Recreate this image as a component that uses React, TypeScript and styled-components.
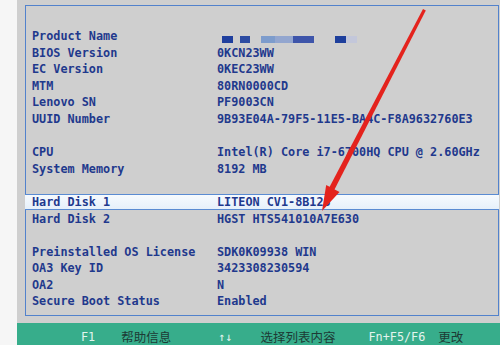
import React from "react";
import styled, { createGlobalStyle } from "styled-components";

const GlobalStyle = createGlobalStyle`
  html, body {
    margin: 0;
    padding: 0;
    background: #ffffff;
  }
`;

type Info = { label: string; value: string; selected?: boolean } | null;

const rows: Info[] = [
  { label: "Product Name", value: "" },
  { label: "BIOS Version", value: "0KCN23WW" },
  { label: "EC Version", value: "0KEC23WW" },
  { label: "MTM", value: "80RN0000CD" },
  { label: "Lenovo SN", value: "PF9003CN" },
  { label: "UUID Number", value: "9B93E04A-79F5-11E5-BA4C-F8A9632760E3" },
  null,
  { label: "CPU", value: "Intel(R) Core i7-6700HQ CPU @ 2.60GHz" },
  { label: "System Memory", value: "8192 MB" },
  null,
  { label: "Hard Disk 1", value: "LITEON CV1-8B128", selected: true },
  { label: "Hard Disk 2", value: "HGST HTS541010A7E630" },
  null,
  { label: "Preinstalled OS License", value: "SDK0K09938 WIN" },
  { label: "OA3 Key ID", value: "3423308230594" },
  { label: "OA2", value: "N" },
  { label: "Secure Boot Status", value: "Enabled" },
];

const mosaic = [
  { w: 11, gap: 7, c: "#1f3f9e" },
  { w: 10, gap: 11, c: "#2c4ba2" },
  { w: 14, gap: 0, c: "#7d9ccc" },
  { w: 18, gap: 0, c: "#93a6cf" },
  { w: 21, gap: 21, c: "#3e55aa" },
  { w: 11, gap: 0, c: "#1e3f9c" },
  { w: 11, gap: 0, c: "#c3c7da" },
];

const keys = [
  { key: "F1", desc: "帮助信息", before: 64, between: 26 },
  { key: "↑↓", desc: "选择列表内容", before: 47, between: 28 },
  { key: "Fn+F5/F6", desc: "更改", before: 33, between: 13 },
];

const App: React.FC = () => {
  return (
    <Screen>
      <GlobalStyle />
      <Strip />
      <Main>
        <Panel>
          <Frame>
            {rows.map((row, i) =>
              row ? (
                <Row key={i} $selected={row.selected}>
                  <Label>{row.label}</Label>
                  {row.value ? (
                    <Value>{row.value}</Value>
                  ) : (
                    <Mosaic>
                      {mosaic.map((m, j) => (
                        <Block key={j} $w={m.w} $gap={m.gap} $color={m.c} />
                      ))}
                    </Mosaic>
                  )}
                </Row>
              ) : (
                <Blank key={i} />
              )
            )}
          </Frame>
        </Panel>
        <Footer>
          {keys.map((k) => (
            <React.Fragment key={k.key}>
              <Key $before={k.before}>{k.key}</Key>
              <Desc $before={k.between}>{k.desc}</Desc>
            </React.Fragment>
          ))}
        </Footer>
      </Main>
      <Arrow width="500" height="345" viewBox="0 0 500 345">
        <polygon points="423,9 425.8,10.5 334,190.5 329,188" fill="#e4231d" />
        <polygon points="322,211 326.2,185 339.5,192" fill="#e4231d" />
      </Arrow>
    </Screen>
  );
};

export default App;

const Screen = styled.div`
  position: relative;
  display: flex;
  width: 500px;
  height: 345px;
  overflow: hidden;
  background: #ffffff;
`;

const Strip = styled.div`
  width: 17px;
  flex-shrink: 0;
  background: #f6f6f6;
`;

const Main = styled.div`
  display: flex;
  flex-direction: column;
  flex: 1;
`;

const Panel = styled.div`
  height: 323px;
  flex-shrink: 0;
  background: #cfcfcf;
  padding: 5px 1px 0 8px;
  box-sizing: border-box;
`;

const Frame = styled.div`
  height: 311px;
  box-sizing: border-box;
  border: 1px solid #5282cc;
  padding-top: 21.7px;
`;

const Row = styled.div<{ $selected?: boolean }>`
  display: grid;
  grid-template-columns: 185px 1fr;
  align-items: center;
  height: 16.6px;
  box-sizing: border-box;
  margin: 0 -1px;
  padding-left: 7px;
  font-family: "DejaVu Sans Mono", "Liberation Mono", monospace;
  font-size: 11.8px;
  font-weight: bold;
  color: #1f398d;
  white-space: nowrap;
  background: ${(p) =>
    p.$selected ? "linear-gradient(#f6fafe, #e6f0fa)" : "transparent"};
  border-top: 1px solid ${(p) => (p.$selected ? "#5a8bd2" : "transparent")};
  border-bottom: 1px solid ${(p) => (p.$selected ? "#5a8bd2" : "transparent")};
`;

const Label = styled.span``;

const Value = styled.span``;

const Mosaic = styled.span`
  display: flex;
  align-items: center;
  height: 7px;
  margin-top: 7px;
  padding-left: 5px;
`;

const Block = styled.span<{ $w: number; $gap: number; $color: string }>`
  width: ${(p) => p.$w}px;
  height: 7px;
  margin-right: ${(p) => p.$gap}px;
  background: ${(p) => p.$color};
`;

const Blank = styled.div`
  height: 16.6px;
`;

const Footer = styled.div`
  display: flex;
  align-items: center;
  flex: 1;
  background: #37ad8b;
  padding-top: 6px;
  box-sizing: border-box;
  white-space: nowrap;
`;

const Key = styled.span<{ $before: number }>`
  margin-left: ${(p) => p.$before}px;
  font-family: "DejaVu Sans Mono", "Liberation Mono", monospace;
  font-size: 11.8px;
  color: #e4f4ee;
  line-height: 16px;
`;

const Desc = styled.span<{ $before: number }>`
  margin-left: ${(p) => p.$before}px;
  font-family: "Noto Sans CJK SC", "Noto Sans", sans-serif;
  font-size: 12.5px;
  color: #1d3a35;
  line-height: 16px;
`;

const Arrow = styled.svg`
  position: absolute;
  left: 0;
  top: 0;
  pointer-events: none;
`;
